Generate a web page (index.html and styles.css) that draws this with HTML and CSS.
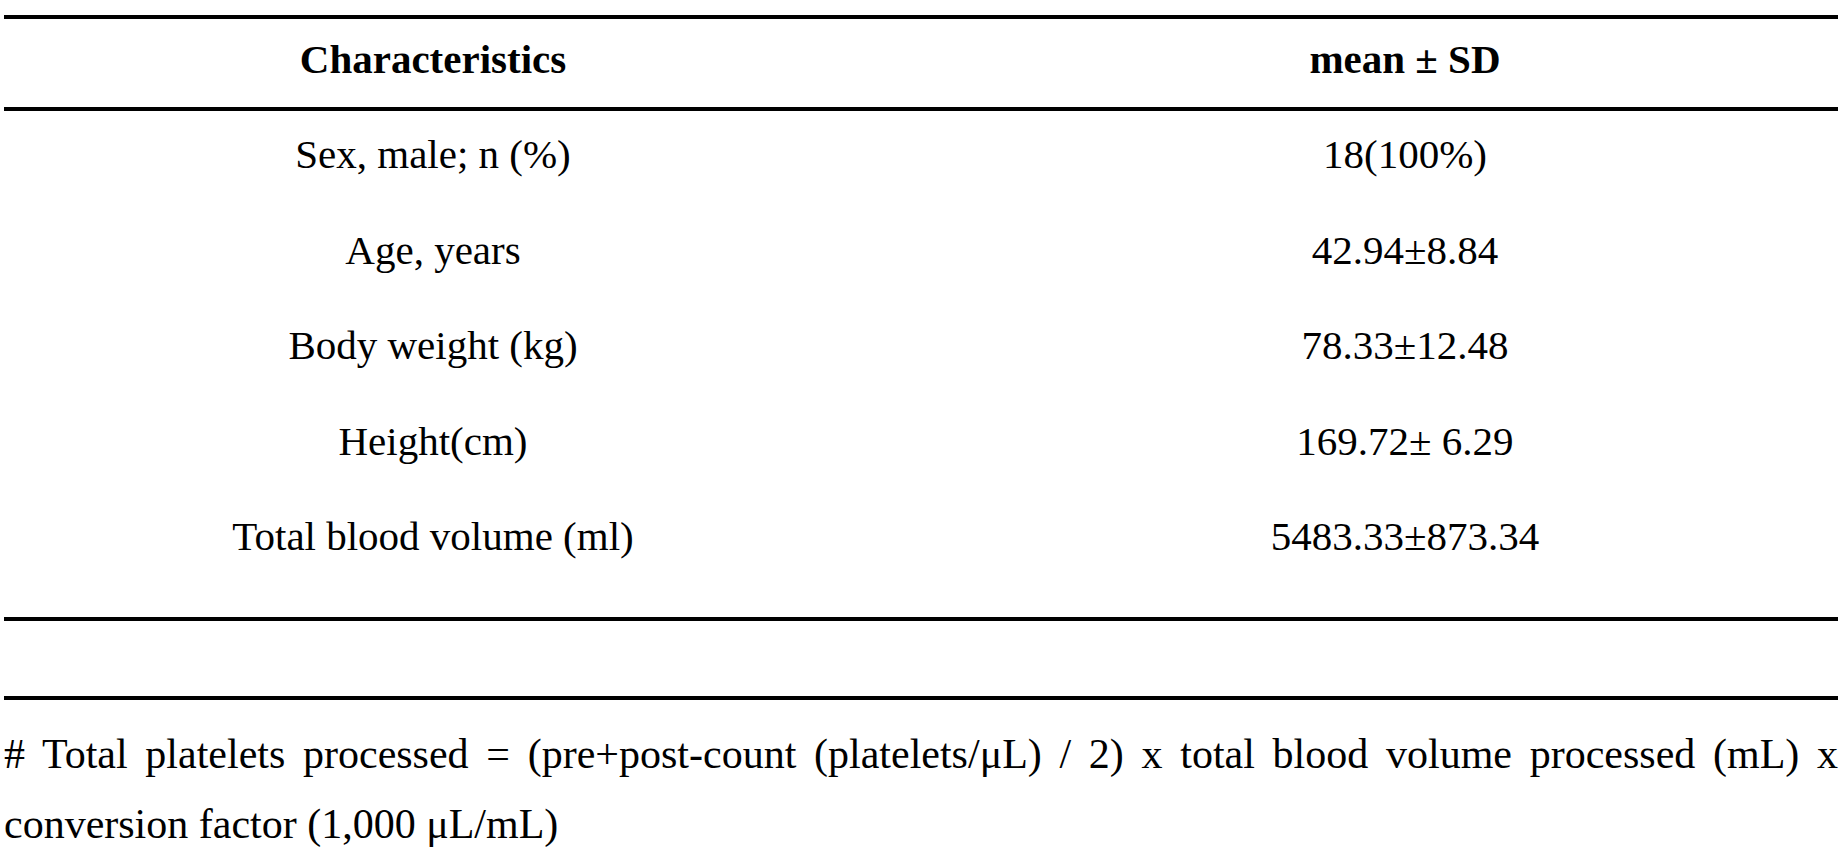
FILE: index.html
```html
<!DOCTYPE html>
<html lang="en">
<head>
<meta charset="utf-8">
<title>Characteristics</title>
<link rel="stylesheet" href="styles.css">
</head>
<body>
<div class="page">
  <div class="table">
    <div class="row head">
      <div class="cell c1">Characteristics</div>
      <div class="cell c2">mean ± SD</div>
    </div>
    <div class="body">
      <div class="row">
        <div class="cell c1">Sex, male; n (%)</div>
        <div class="cell c2">18(100%)</div>
      </div>
      <div class="row">
        <div class="cell c1">Age, years</div>
        <div class="cell c2">42.94±8.84</div>
      </div>
      <div class="row">
        <div class="cell c1">Body weight (kg)</div>
        <div class="cell c2">78.33±12.48</div>
      </div>
      <div class="row">
        <div class="cell c1">Height(cm)</div>
        <div class="cell c2">169.72± 6.29</div>
      </div>
      <div class="row">
        <div class="cell c1">Total blood volume (ml)</div>
        <div class="cell c2">5483.33±873.34</div>
      </div>
    </div>
  </div>
  <p class="note"># Total platelets processed = (pre+post-count (platelets/μL) / 2) x total blood volume processed (mL) x conversion factor (1,000 μL/mL)</p>
</div>
</body>
</html>
```

FILE: styles.css
```css
html, body {
  margin: 0;
  padding: 0;
  background: #fff;
}

.page {
  padding: 15px 7px 0 4px;
  font-family: "Liberation Serif", "Times New Roman", serif;
  color: #000;
}

.table {
  border-top: 4px solid #000;
  border-bottom: 4px solid #000;
  font-size: 41px;
}

.row {
  display: grid;
  grid-template-columns: 858px 1fr;
  line-height: 86.5px;
  padding-bottom: 9px;
}

.row.head {
  font-weight: bold;
  line-height: 80px;
  padding-bottom: 8px;
  border-bottom: 4px solid #000;
}

.body {
  padding-bottom: 28.5px;
}

.cell {
  text-align: center;
  white-space: nowrap;
}

.c2 {
  padding-left: 110px;
}

.note {
  margin: 75px 0 0 0;
  border-top: 4px solid #000;
  padding-top: 19px;
  font-size: 42px;
  line-height: 70px;
  text-align: justify;
}
```
